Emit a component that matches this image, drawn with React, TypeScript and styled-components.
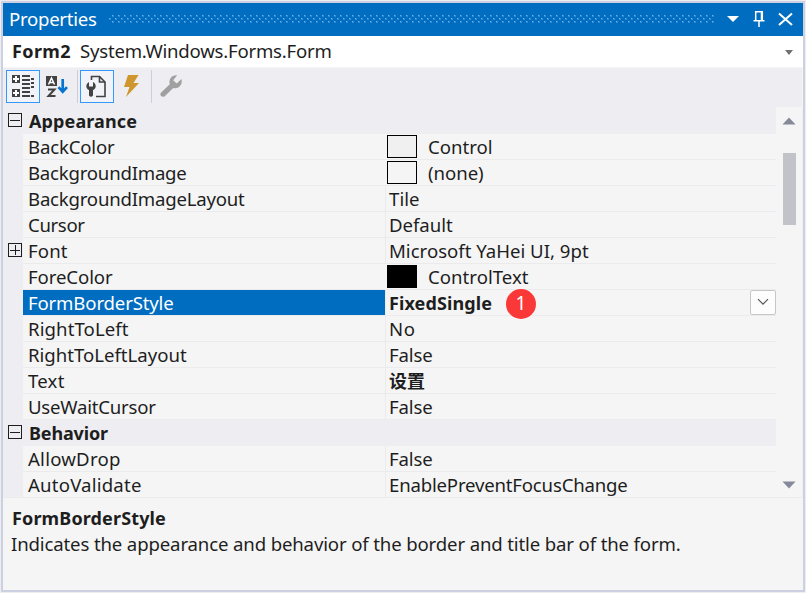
import React, { useLayoutEffect, useRef, useState } from 'react';
import styled, { createGlobalStyle } from 'styled-components';

const GlobalStyle = createGlobalStyle`
  * { box-sizing: border-box; }
  body { margin: 0; background: #eeeef2; overflow: hidden; }
`;

const Panel = styled.div`
  width: 806px;
  height: 593px;
  padding: 1px;
  background: #eeeef2;
  color: #1e1e1e;
  font-family: "Noto Sans", "Noto Sans CJK SC", sans-serif;
  font-size: 18px;
`;

const Frame = styled.div`
  width: 804px;
  height: 591px;
  border: 2px solid #ccd0e0;
  display: flex;
  flex-direction: column;
  background: #f5f5f5;
`;

const TitleBar = styled.header`
  height: 33px;
  flex: none;
  display: flex;
  align-items: center;
  padding: 0 0 1px 6px;
  background: #006dc0;
  color: #fff;
`;

const Label = styled.span<{ $bold?: boolean }>`
  display: inline-block;
  flex: none;
  white-space: pre;
  vertical-align: top;
  line-height: 26px;
  font-size: ${(p) => (p.$bold ? 18 : 18.6)}px;
  font-weight: ${(p) => (p.$bold ? 700 : 400)};
`;

const Grip = styled.svg`
  display: block;
  flex: none;
`;

const TitleButtons = styled.svg`
  display: block;
  flex: none;
  margin-left: auto;
  margin-top: 1px;
`;

const ObjectSelector = styled.div`
  height: 31px;
  flex: none;
  display: flex;
  align-items: center;
  gap: 9px;
  padding: 0 10px 1px 9px;
  background: #fff;
`;

const SelectorArrow = styled.svg`
  display: block;
  margin: 2px 0 0 auto;
`;

const Toolbar = styled.div`
  height: 41px;
  flex: none;
  display: flex;
  padding: 2px 0 0 3px;
  background: #eeeef2;
  border-top: 1px solid #f5f5f5;
  border-right: 1px solid #f5f5f5;
`;

const ToolButton = styled.button<{ $active?: boolean }>`
  width: 34px;
  height: 33px;
  padding: 0;
  display: block;
  border: 1px solid ${(p) => (p.$active ? '#3399ff' : 'transparent')};
  background: ${(p) => (p.$active ? '#f1f3f8' : 'transparent')};
  svg { display: block; }
`;

const Separator = styled.div`
  width: 1px;
  height: 33px;
  margin: 0 2px 0 3px;
  background: #ccced9;
`;

const GridArea = styled.div`
  height: 390px;
  flex: none;
  display: flex;
  border-bottom: 1px solid #ebebed;
  border-right: 1px solid #eeeef2;
`;

const Gutter = styled.div`
  width: 20px;
  flex: none;
  display: flex;
  align-items: center;
  padding: 0 0 2px 5px;
  background: #eeeef2;
`;

const Rows = styled.div`
  width: 773px;
  flex: none;
  overflow: hidden;
`;

const CategoryRow = styled.div`
  height: 26px;
  display: flex;
  background: #eeeef2;
`;

const CategoryName = styled.div`
  padding-left: 6px;
`;

const Row = styled.div`
  height: 26px;
  display: flex;
`;

const NameCell = styled.div<{ $selected?: boolean }>`
  width: 362px;
  flex: none;
  padding-left: 5px;
  border-bottom: 1px solid #ebebed;
  background: ${(p) => (p.$selected ? '#006dc0' : '#f5f5f5')};
  background-clip: padding-box;
  color: ${(p) => (p.$selected ? '#fff' : '#1e1e1e')};
`;

const ValueCell = styled.div<{ $swatch?: boolean }>`
  flex: 1;
  display: flex;
  border-left: 1px solid ${(p) => (p.$swatch ? 'transparent' : '#ebebed')};
  border-bottom: 1px solid #ebebed;
  padding-left: ${(p) => (p.$swatch ? 1 : 3)}px;
`;

const Swatch = styled.div<{ $color: string }>`
  width: 30px;
  height: 23px;
  flex: none;
  margin: 1px 11px 0 0;
  border: 1px solid #000;
  background: ${(p) => p.$color};
`;

const Marker = styled.div`
  width: 30px;
  height: 30px;
  flex: none;
  margin: -1px 0 -4px 14px;
  border-radius: 50%;
  background: #fb3838;
  color: #fff;
  font-size: 19px;
  line-height: 29px;
  text-align: center;
  z-index: 1;
`;

const DropButton = styled.button`
  width: 26px;
  height: 25px;
  margin: 0 0 0 auto;
  padding: 0;
  border: 1px solid #c6c6c6;
  border-radius: 2px;
  background: #fdfdfd;
  svg { display: block; margin: -2px auto 0; }
`;

const ScrollBar = styled.div`
  flex: 1;
  display: flex;
  flex-direction: column;
  align-items: center;
  margin-top: -1px;
  padding: 10px 0 8px;
  background: #f5f5f5;
`;

const Thumb = styled.div`
  width: 13px;
  height: 72px;
  margin: 28px 0 auto 1px;
  background: #c2c3c9;
`;

const Description = styled.div`
  flex: 1;
  padding: 7px 8px;
`;

const DescriptionTitle = styled.div`
  height: 26px;
  padding-left: 1px;
`;

/** Text whose tracking is adjusted so that it spans the requested width. */
function FitText({ text, width, bold }: { text: string; width: number; bold?: boolean }) {
  const ref = useRef<HTMLSpanElement>(null);
  const [spacing, setSpacing] = useState(0);
  useLayoutEffect(() => {
    if (!ref.current) return;
    const natural = ref.current.getBoundingClientRect().width;
    setSpacing((width + (bold ? 1 : 0.6) - natural) / text.length);
  }, [text, width, bold]);
  return (
    <Label ref={ref} $bold={bold} style={{ letterSpacing: `${spacing}px` }}>
      {text}
    </Label>
  );
}

function Expander({ open }: { open: boolean }) {
  return (
    <svg width="14" height="14" viewBox="0 0 14 14" fill="none" stroke="#1e1e1e" shapeRendering="crispEdges">
      <path d="M.5 .5H13.5V13.5H.5ZM2 7.5H12" />
      {!open && <path d="M7.5 2V12" />}
    </svg>
  );
}

type Item = {
  name: string;
  nameWidth: number;
  value: string;
  valueWidth: number;
  swatch?: string;
  bold?: boolean;
  selected?: boolean;
  expandable?: boolean;
};

const appearance: Item[] = [
  { name: 'BackColor', nameWidth: 86, value: 'Control', valueWidth: 64, swatch: '#f0f0f0' },
  { name: 'BackgroundImage', nameWidth: 158, value: '(none)', valueWidth: 55, swatch: '#f5f5f5' },
  { name: 'BackgroundImageLayout', nameWidth: 216, value: 'Tile', valueWidth: 30 },
  { name: 'Cursor', nameWidth: 56, value: 'Default', valueWidth: 63 },
  { name: 'Font', nameWidth: 39, value: 'Microsoft YaHei UI, 9pt', valueWidth: 199, expandable: true },
  { name: 'ForeColor', nameWidth: 84, value: 'ControlText', valueWidth: 100, swatch: '#000' },
  { name: 'FormBorderStyle', nameWidth: 145, value: 'FixedSingle', valueWidth: 102, bold: true, selected: true },
  { name: 'RightToLeft', nameWidth: 100, value: 'No', valueWidth: 26 },
  { name: 'RightToLeftLayout', nameWidth: 158, value: 'False', valueWidth: 43 },
  { name: 'Text', nameWidth: 36, value: '设置', valueWidth: 35, bold: true },
  { name: 'UseWaitCursor', nameWidth: 127, value: 'False', valueWidth: 43 },
];

const behavior: Item[] = [
  { name: 'AllowDrop', nameWidth: 92, value: 'False', valueWidth: 43 },
  { name: 'AutoValidate', nameWidth: 113, value: 'EnablePreventFocusChange', valueWidth: 238 },
];

function Category({ title, width }: { title: string; width: number }) {
  return (
    <CategoryRow>
      <Gutter><Expander open /></Gutter>
      <CategoryName><FitText text={title} width={width} bold /></CategoryName>
    </CategoryRow>
  );
}

function PropertyRow({ item }: { item: Item }) {
  return (
    <Row>
      <Gutter>{item.expandable && <Expander open={false} />}</Gutter>
      <NameCell $selected={item.selected}><FitText text={item.name} width={item.nameWidth} /></NameCell>
      <ValueCell $swatch={!!item.swatch}>
        {item.swatch && <Swatch $color={item.swatch} />}
        <FitText text={item.value} width={item.valueWidth} bold={item.bold} />
        {item.selected && (
          <>
            <Marker>1</Marker>
            <DropButton aria-label="Open list">
              <svg width="12" height="8" viewBox="0 0 12 8" fill="none" stroke="#555" strokeWidth="1.2"><path d="M1 1.2L6 6.2L11 1.2" /></svg>
            </DropButton>
          </>
        )}
      </ValueCell>
    </Row>
  );
}

export default function App() {
  return (
    <>
      <GlobalStyle />
      <Panel>
        <Frame>
          <TitleBar>
            <FitText text="Properties" width={87} />
            <Grip width="618" height="8" viewBox="97 15 618 8" shapeRendering="crispEdges">
              <defs>
                <pattern id="grip" x="109" y="15" width="6" height="6" patternUnits="userSpaceOnUse">
                  <path d="M3 0h2v2h-2zM0 3h2v2h-2z" fill="#2f8bd0" />
                  <path d="M3 0h1v1h-1zM0 3h1v1h-1z" fill="#6bb4e6" />
                </pattern>
              </defs>
              <rect x="109" y="15" width="605" height="8" fill="url(#grip)" />
            </Grip>
            <TitleButtons width="85" height="33" viewBox="718 3 85 33">
              <path d="M727 16H739L733 22Z" fill="#fff" />
              <path d="M755.7 20.5V11.7H762.3V20.5M753.5 20.8H764.5M759 21V27M761.5 12V20" fill="none" stroke="#fff" strokeWidth="1.5" />
              <path d="M779 13.5L792 25M792 13.5L779 25" stroke="#fff" strokeWidth="2" />
            </TitleButtons>
          </TitleBar>
          <ObjectSelector>
            <FitText text="Form2" width={58} bold />
            <FitText text="System.Windows.Forms.Form" width={251} />
            <SelectorArrow width="8" height="5" viewBox="0 0 8 5"><path d="M0 0H8L4 5Z" fill="#717171" /></SelectorArrow>
          </ObjectSelector>
          <Toolbar>
            <ToolButton $active aria-label="Categorized">
              <svg width="32" height="31" viewBox="7 71 32 31" shapeRendering="crispEdges">
                <path d="M12 75h8v8h-8zM12 89h8v8h-8z" fill="#424242" />
                <path d="M13 79H19M16 76V82M13 93H19M16 90V96" stroke="#fff" strokeWidth="2" />
                <path d="M22 76H30M22 80H30M22 84H30M22 88H30M22 92H30M22 96H30M31 79H34M31 83H34M31 87H34M31 96H34" stroke="#424242" strokeWidth="2" />
              </svg>
            </ToolButton>
            <ToolButton aria-label="Alphabetical">
              <svg width="32" height="31" viewBox="41 71 32 31">
                <path d="M46 76h11v10h-11z" fill="#424242" />
                <path d="M48.5 84.5L51.5 78L54.5 84.5M49.5 82.5H53.5" stroke="#fff" strokeWidth="1.5" fill="none" />
                <path d="M48 89.5H54.5L48.5 96H55.5" stroke="#424242" strokeWidth="2" fill="none" />
                <path d="M62.7 79V91M58.5 87.2L62.7 91.8L67 87.2" stroke="#0874d1" strokeWidth="2.7" fill="none" />
              </svg>
            </ToolButton>
            <Separator />
            <ToolButton $active aria-label="Properties">
              <svg width="32" height="31" viewBox="81 71 32 31">
                <path d="M91.5 80V76.5H99.5L105 82V96.5H96" stroke="#424242" strokeWidth="1.6" fill="none" />
                <path d="M99.5 76.5V82H105" stroke="#424242" strokeWidth="1.6" fill="none" />
                <path d="M89 82C85.2 84 85.8 89 89 90V95.5Q91 98 93 95.5V90C96.5 88.8 96.8 84 93 82V86.5H89Z" fill="#424242" />
              </svg>
            </ToolButton>
            <ToolButton aria-label="Events">
              <svg width="32" height="31" viewBox="115 71 32 31">
                <path d="M128 75H138.5L133.5 83H139L126 97L129.5 87H124Z" fill="#cf962e" />
              </svg>
            </ToolButton>
            <Separator />
            <ToolButton aria-label="Property pages" disabled>
              <svg width="32" height="31" viewBox="155 71 32 31">
                <path d="M177.2 75.2C172 74.5 168.4 79 169.8 84.2L160.6 93Q159.4 97 164.2 96.8L173.2 88.1C179.2 89.3 183 84 181.4 79L176.7 83.4L173.2 80.3Z" fill="#a0a0a0" />
              </svg>
            </ToolButton>
          </Toolbar>
          <GridArea>
            <Rows>
              <Category title="Appearance" width={107} />
              {appearance.map((item) => <PropertyRow key={item.name} item={item} />)}
              <Category title="Behavior" width={78} />
              {behavior.map((item) => <PropertyRow key={item.name} item={item} />)}
            </Rows>
            <ScrollBar>
              <svg width="14" height="8" viewBox="0 0 14 8"><path d="M.5 7.5L7 .5L13.5 7.5Z" fill="#868999" /></svg>
              <Thumb />
              <svg width="14" height="8" viewBox="0 0 14 8"><path d="M.5 .5H13.5L7 7.5Z" fill="#868999" /></svg>
            </ScrollBar>
          </GridArea>
          <Description>
            <DescriptionTitle><FitText text="FormBorderStyle" width={153} bold /></DescriptionTitle>
            <FitText text="Indicates the appearance and behavior of the border and title bar of the form." width={669} />
          </Description>
        </Frame>
      </Panel>
    </>
  );
}
